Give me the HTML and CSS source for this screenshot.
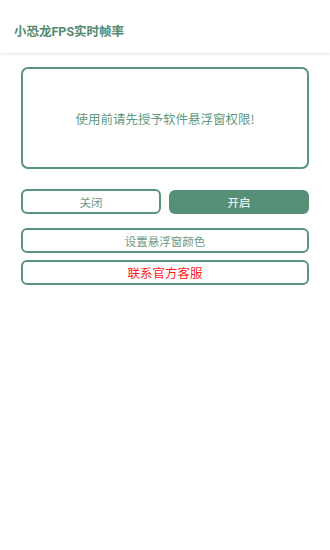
FILE: index.html
```html
<!DOCTYPE html>
<html lang="zh">
<head>
<meta charset="utf-8">
<title>小恐龙FPS实时帧率</title>
<link rel="stylesheet" href="styles.css">
</head>
<body>
<header class="topbar">
  <h1 class="title">小恐龙FPS实时帧率</h1>
</header>
<main class="content">
  <div class="notice">使用前请先授予软件悬浮窗权限!</div>
  <div class="row">
    <button class="btn btn-outline">关闭</button>
    <button class="btn btn-filled">开启</button>
  </div>
  <button class="btn btn-outline btn-wide">设置悬浮窗颜色</button>
  <button class="btn btn-outline btn-wide btn-red">联系官方客服</button>
</main>
</body>
</html>
```

FILE: styles.css
```css
html, body {
  margin: 0;
  padding: 0;
  background: #ffffff;
  font-family: "Noto Sans CJK SC", "Noto Sans", sans-serif;
}
.topbar {
  height: 53px;
  background: #ffffff;
  box-shadow: 0 1px 3px rgba(0, 0, 0, 0.12);
  display: flex;
  align-items: center;
  padding: 8px 0 0 14px;
  box-sizing: border-box;
  position: relative;
}
.title {
  margin: 0;
  font-size: 12.5px;
  font-weight: 700;
  color: #52896f;
  font-family: Roboto, "Noto Sans CJK SC", sans-serif;
}
.content {
  padding: 14px 21px 0 21px;
  display: flex;
  flex-direction: column;
}
.notice {
  height: 102px;
  border: 2px solid #5a9479;
  border-radius: 7px;
  box-sizing: border-box;
  display: flex;
  align-items: center;
  justify-content: center;
  font-size: 12.5px;
  color: #5f9a7e;
}
.row {
  display: grid;
  grid-template-columns: 1fr 1fr;
  gap: 8px;
  margin-top: 20px;
}
.btn {
  height: 25px;
  box-sizing: border-box;
  border-radius: 6px;
  font-family: "Noto Sans CJK SC", "Noto Sans", sans-serif;
  font-size: 11.5px;
  padding: 0;
  min-width: 0;
  cursor: pointer;
}
.btn-outline {
  background: #ffffff;
  border: 2px solid #5a9479;
  color: #6a9a84;
}
.btn-filled {
  background: #578f76;
  border: none;
  color: #ffffff;
  height: 24px;
  margin-top: 1px;
}
.btn-wide {
  width: 288px;
  margin-top: 14px;
}
.btn-wide + .btn-wide {
  margin-top: 7px;
}
.btn-red {
  color: #ff1a1a;
  font-size: 12.5px;
}
```
